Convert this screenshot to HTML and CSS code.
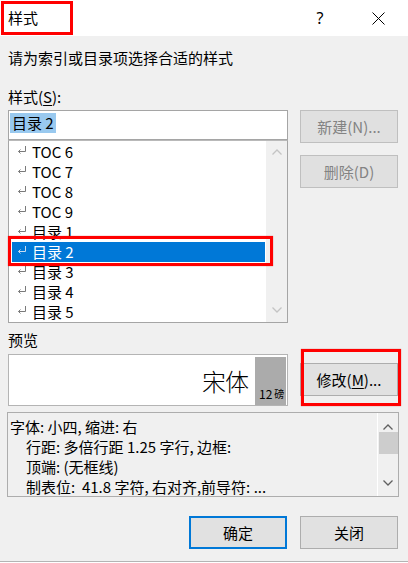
FILE: index.html
```
<!DOCTYPE html>
<html lang="zh-CN">

<head>
    <meta charset="UTF-8">
    <meta name="viewport" content="width=device-width, initial-scale=1.0">
    <title>样式</title>
    <link rel="stylesheet" href="styles.css">
</head>

<body>
    <div class="dialog">
        <div class="titlebar">
            <div class="title-mark"><span class="title">样式</span></div>
            <span class="tb-btn help">?</span>
            <span class="tb-btn close">
                <svg width="13" height="13" viewBox="0 0 13 13"><path d="M0.5 0.5 L12.5 12.5 M12.5 0.5 L0.5 12.5" stroke="#000" stroke-width="1" fill="none"/></svg>
            </span>
        </div>

        <div class="content">
            <p class="intro">请为索引或目录项选择合适的样式</p>
            <p class="label">样式(<u>S</u>):</p>

            <div class="pair">
                <div class="left">
                    <div class="input"><span class="sel-text">目录 2</span></div>
                    <div class="listbox">
                        <ul class="items">
                            <li><svg class="ret" width="10" height="10" viewBox="0 0 10 10"><path d="M8.5 1 V6.5 H1.5 M3.5 4.5 L1.5 6.5 L3.5 8.5" /></svg>TOC 6</li>
                            <li><svg class="ret" width="10" height="10" viewBox="0 0 10 10"><path d="M8.5 1 V6.5 H1.5 M3.5 4.5 L1.5 6.5 L3.5 8.5" /></svg>TOC 7</li>
                            <li><svg class="ret" width="10" height="10" viewBox="0 0 10 10"><path d="M8.5 1 V6.5 H1.5 M3.5 4.5 L1.5 6.5 L3.5 8.5" /></svg>TOC 8</li>
                            <li><svg class="ret" width="10" height="10" viewBox="0 0 10 10"><path d="M8.5 1 V6.5 H1.5 M3.5 4.5 L1.5 6.5 L3.5 8.5" /></svg>TOC 9</li>
                            <li><svg class="ret" width="10" height="10" viewBox="0 0 10 10"><path d="M8.5 1 V6.5 H1.5 M3.5 4.5 L1.5 6.5 L3.5 8.5" /></svg>目录 1</li>
                            <li class="active"><svg class="ret" width="10" height="10" viewBox="0 0 10 10"><path d="M8.5 1 V6.5 H1.5 M3.5 4.5 L1.5 6.5 L3.5 8.5" /></svg>目录 2<span class="mark row-mark"></span></li>
                            <li><svg class="ret" width="10" height="10" viewBox="0 0 10 10"><path d="M8.5 1 V6.5 H1.5 M3.5 4.5 L1.5 6.5 L3.5 8.5" /></svg>目录 3</li>
                            <li><svg class="ret" width="10" height="10" viewBox="0 0 10 10"><path d="M8.5 1 V6.5 H1.5 M3.5 4.5 L1.5 6.5 L3.5 8.5" /></svg>目录 4</li>
                            <li><svg class="ret" width="10" height="10" viewBox="0 0 10 10"><path d="M8.5 1 V6.5 H1.5 M3.5 4.5 L1.5 6.5 L3.5 8.5" /></svg>目录 5</li>
                        </ul>
                        <div class="vscroll light">
                            <svg width="10" height="6" viewBox="0 0 10 6"><path d="M0.5 5.5 L5 1 L9.5 5.5" /></svg>
                            <svg width="10" height="6" viewBox="0 0 10 6"><path d="M0.5 0.5 L5 5 L9.5 0.5" /></svg>
                        </div>
                    </div>
                </div>
                <div class="right">
                    <span class="btn disabled">新建(N)...</span>
                    <span class="btn disabled">删除(D)</span>
                </div>
            </div>

            <p class="label label-preview">预览</p>
            <div class="pair">
                <div class="preview">
                    <span class="font-name">宋体</span>
                    <span class="size-tag"><b>12</b> 磅</span>
                </div>
                <div class="right">
                    <span class="btn modify">修改(<u>M</u>)...<span class="mark btn-mark"></span></span>
                </div>
            </div>

            <div class="desc">
                <div class="desc-text">
                    <p>字体: 小四, 缩进: 右</p>
                    <p class="indent">行距: 多倍行距 1.25 字行, 边框:</p>
                    <p class="indent">顶端: (无框线)</p>
                    <p class="indent">制表位:&nbsp; 41.8 字符, 右对齐,前导符: ...</p>
                </div>
                <div class="vscroll dark">
                    <svg width="10" height="6" viewBox="0 0 10 6"><path d="M0.5 5.5 L5 1 L9.5 5.5" /></svg>
                    <span class="thumb"></span>
                    <svg width="10" height="6" viewBox="0 0 10 6"><path d="M0.5 0.5 L5 5 L9.5 0.5" /></svg>
                </div>
            </div>

            <div class="footer">
                <span class="btn default">确定</span>
                <span class="btn">关闭</span>
            </div>
        </div>
    </div>
</body>

</html>
```

FILE: styles.css
```
* {
    margin: 0;
    padding: 0;
    box-sizing: border-box;
}

li {
    list-style: none;
}

body {
    width: 408px;
    height: 563px;
    overflow: hidden;
    font-family: "Noto Sans CJK SC", "Noto Sans", sans-serif;
    font-size: 15px;
    line-height: 20px;
    color: #000;
}

u {
    text-decoration: underline;
    text-underline-offset: 2px;
}

.dialog {
    width: 408px;
    height: 562px;
    background-color: #f0f0f0;
    border-bottom: 1px solid #b4b4b4;
}

/* 标题栏 */
.titlebar {
    height: 36px;
    background-color: #fff;
    display: flex;
    align-items: flex-start;
}

.title-mark {
    margin: 1px 0 0 1px;
    width: 72px;
    height: 34px;
    border: 3px solid #f00;
    padding-left: 4px;
    display: flex;
    align-items: center;
}

.tb-btn {
    width: 58px;
    height: 36px;
    display: flex;
    align-items: center;
    justify-content: center;
}

.help {
    margin-left: auto;
    font-family: "Noto Sans", sans-serif;
    font-size: 16px;
}

.close {
    margin-right: 1px;
}

.content {
    padding: 0 10px 0 8px;
}

.intro {
    margin-top: 12px;
}

.label {
    margin-top: 19px;
}

.pair {
    display: grid;
    grid-template-columns: 280px 98px;
    column-gap: 12px;
    margin-top: 3px;
}

.left {
    display: flex;
    flex-direction: column;
}

.right {
    display: flex;
    flex-direction: column;
    gap: 12px;
}

/* 输入框与列表 */
.input {
    height: 30px;
    background-color: #fff;
    border: 1px solid #a5a5a5;
    padding: 2px 1px;
}

.sel-text {
    display: inline-block;
    height: 20px;
    padding: 0 2px;
    background-color: #99c9ef;
}

.listbox {
    height: 183px;
    border: 1px solid #a5a5a5;
    border-top-color: #b9b9b9;
    background-color: #fff;
    display: flex;
}

.items {
    flex: 1;
    padding: 1px 1px 0 3px;
}

.items li {
    position: relative;
    height: 20px;
    line-height: 20px;
    display: flex;
    align-items: center;
    padding-left: 5px;
    white-space: nowrap;
}

.ret {
    width: 10px;
    height: 10px;
    margin: -4px 5px 0 0;
    fill: none;
    stroke: #7a7a7a;
    stroke-width: 1;
}

.items li.active {
    background-color: #0078d7;
    color: #fff;
}

.items li.active .ret {
    stroke: #c8dcf0;
}

.vscroll {
    width: 21px;
    display: flex;
    flex-direction: column;
    align-items: center;
    justify-content: space-between;
    background-color: #f0f0f0;
}

.vscroll svg {
    fill: none;
    stroke-width: 1.3;
}

.vscroll.light {
    padding: 8px 0 9px;
}

.vscroll.light svg {
    stroke: #c4c4c4;
}

.vscroll.dark {
    padding: 11px 0 10px;
    border-left: 1px solid #fff;
}

.vscroll.dark svg {
    stroke: #606060;
}

.thumb {
    width: 19px;
    height: 22px;
    margin: 2px 0 auto;
    background-color: #cdcdcd;
}

/* 红色标注框 */
.mark {
    position: absolute;
    border: 3px solid #f00;
    box-shadow: 0 0 1px rgba(200, 0, 0, 0.6);
    pointer-events: none;
    z-index: 2;
}

.row-mark {
    top: -6px;
    bottom: -4px;
    left: -4px;
    right: -8px;
}

.btn-mark {
    top: -15px;
    bottom: -11px;
    left: 0;
    right: -4px;
}

/* 按钮 */
.btn {
    position: relative;
    height: 33px;
    display: flex;
    align-items: center;
    justify-content: center;
    background-color: #e1e1e1;
    border: 1px solid #adadad;
}

.btn.disabled {
    color: #838383;
    border-color: #bfbfbf;
    background-color: #e0e0e0;
}

.btn.default {
    border: 2px solid #0078d7;
}

.label-preview {
    margin-top: 7px;
}

.label-preview + .pair {
    margin-top: 4px;
}

.preview {
    height: 52px;
    background-color: #fff;
    border: 1px solid #b4b4b4;
    padding: 2px 1px 0 0;
    display: flex;
    justify-content: flex-end;
}

.font-name {
    align-self: center;
    font-size: 24px;
    line-height: 30px;
    margin: 0 7px 1px 0;
    font-weight: 300;
    letter-spacing: -1px;
}

.size-tag {
    width: 31px;
    height: 48px;
    background-color: #ababab;
    font-size: 10px;
    line-height: 12px;
    padding: 0 0 5px 4px;
    display: flex;
    align-items: flex-end;
    white-space: nowrap;
}

.size-tag b {
    font-weight: normal;
    font-size: 12px;
    margin-right: 2px;
}

.modify {
    margin-top: 9px;
}

/* 说明 */
.desc {
    margin: 6px 0 0 -1px;
    width: 392px;
    height: 85px;
    border: 1px solid #adadad;
    display: flex;
    background-color: #f0f0f0;
}

.desc-text {
    flex: 1;
    padding: 4px 0 0 2px;
    white-space: nowrap;
    overflow: hidden;
}

.desc-text .indent {
    padding-left: 16px;
}

.footer {
    margin-top: 19px;
    display: flex;
    justify-content: flex-end;
    gap: 13px;
}

.footer .btn {
    width: 98px;
}
```
